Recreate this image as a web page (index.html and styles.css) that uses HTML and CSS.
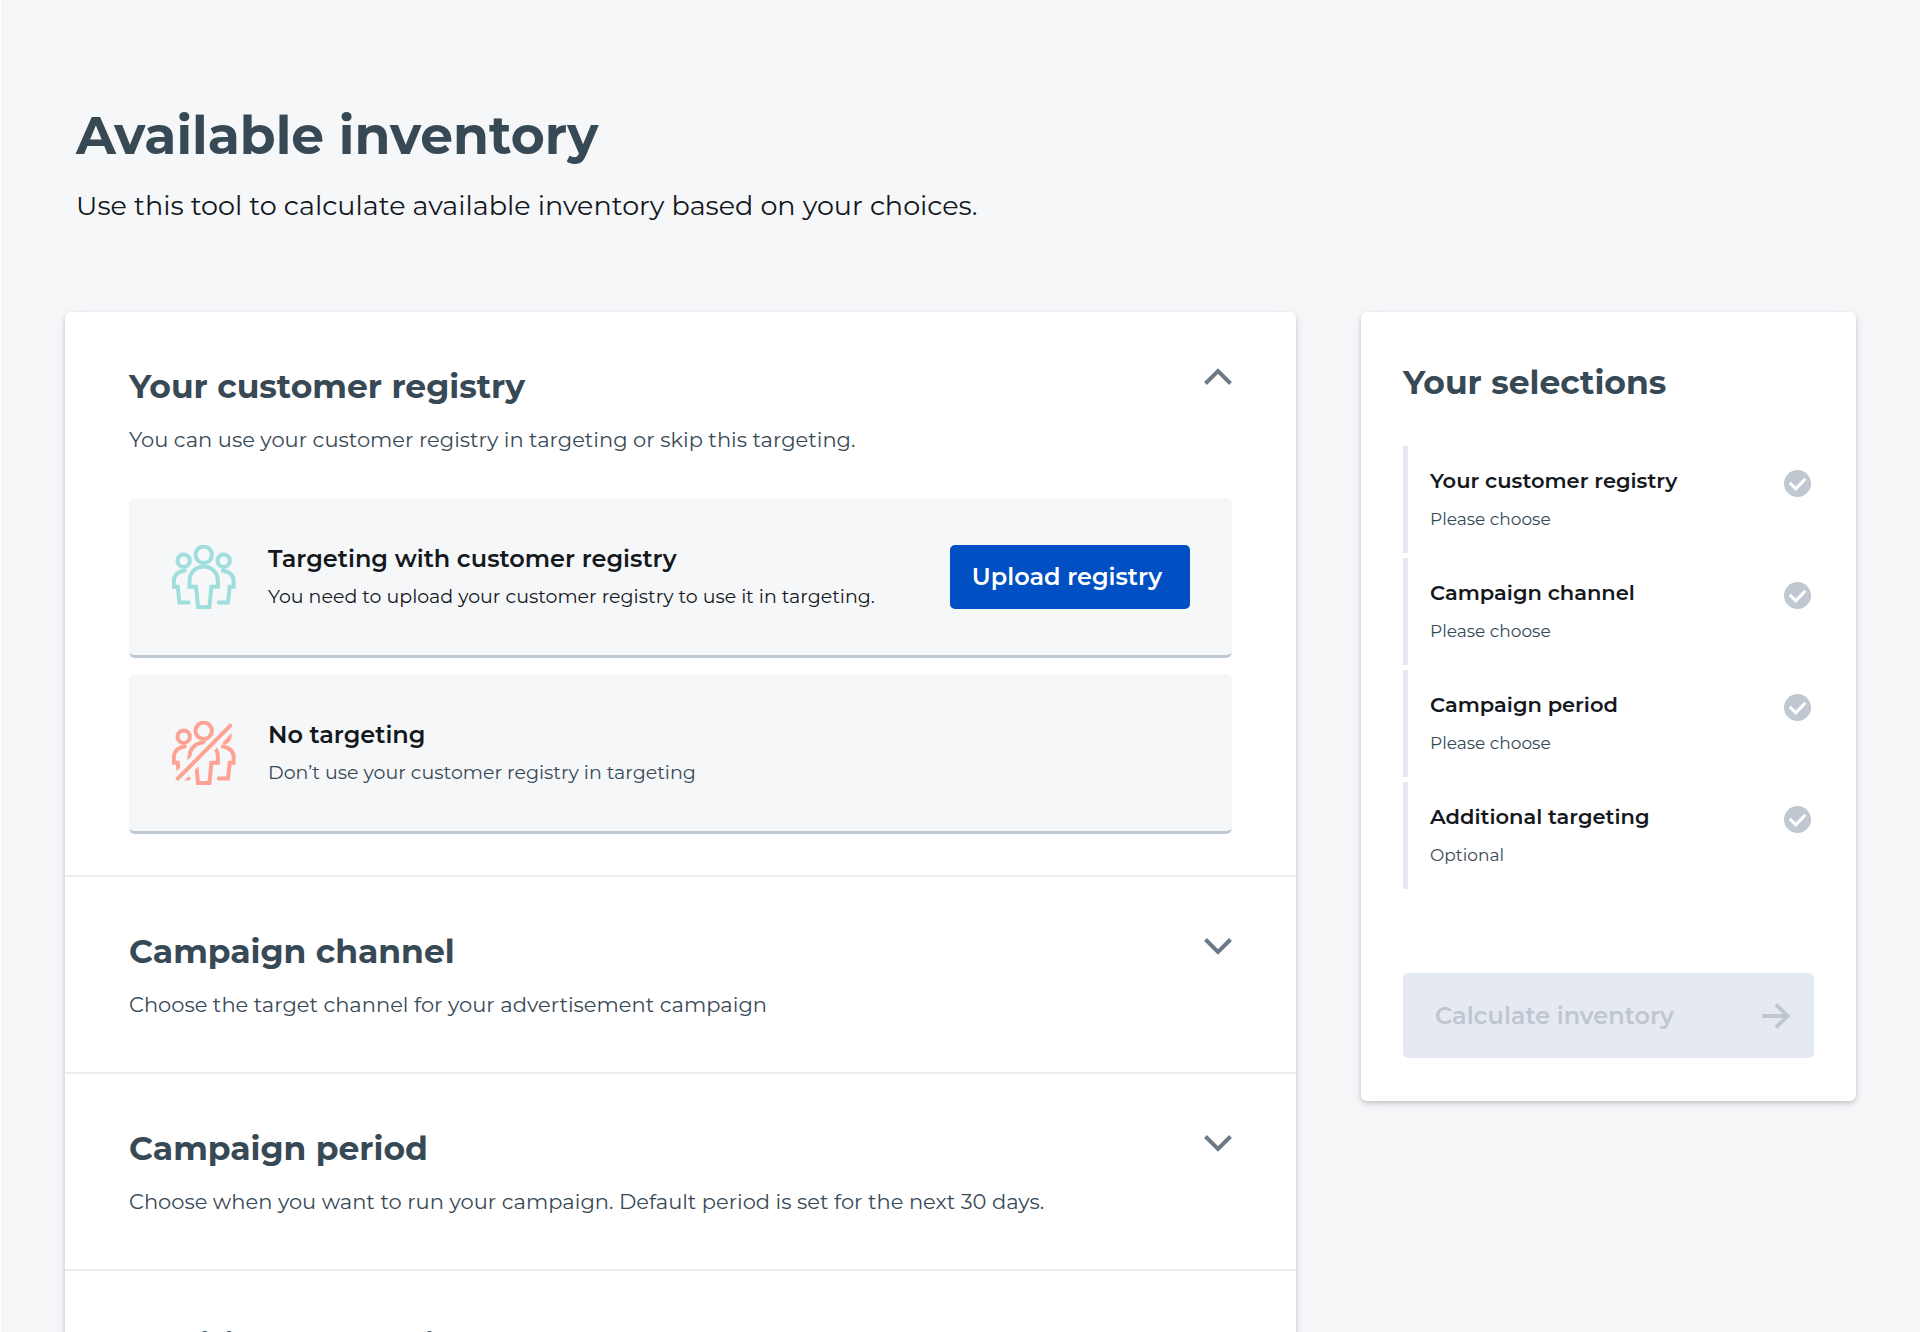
FILE: index.html
```html
<!DOCTYPE html>
<html lang="en">
<head>
    <meta charset="UTF-8">
    <meta name="viewport" content="width=device-width, initial-scale=1.0">
    <title>Available inventory</title>
    <link rel="stylesheet" href="styles.css">
</head>
<body>
    <header class="page-header">
        <h1>Available inventory</h1>
        <p>Use this tool to calculate available inventory based on your choices.</p>
    </header>

    <div class="columns">
        <main class="card">
            <section class="step">
                <div class="step-header">
                    <div>
                        <h2>Your customer registry</h2>
                        <p class="step-text">You can use your customer registry in targeting or skip this targeting.</p>
                    </div>
                    <button class="toggle open" type="button" aria-label="Collapse" aria-expanded="true">
                        <svg viewBox="0 0 28 18"><path d="M1.5 15.5 14 3l12.5 12.5"/></svg>
                    </button>
                </div>

                <div class="options">
                    <div class="option">
                        <svg class="option-icon teal" viewBox="0 0 64 64">
                            <circle cx="31.7" cy="9.8" r="8.2"/>
                            <circle cx="11.7" cy="15.7" r="6.2"/>
                            <circle cx="51.7" cy="15.7" r="6.2"/>
                            <path d="M17.5 41.7V35.7a14.2 14.2 0 0 1 28.4 0v6H39.4L37.4 62H26l-2-20.3z"/>
                            <path d="M12.7 25.4C6.5 26 1.8 30 1.8 36v5.7h3.9l1.7 15.8h9.2"/>
                            <path d="M50.7 25.4c6.2.6 10.9 4.6 10.9 10.6v5.7h-3.9L56 57.5h-9.2"/>
                        </svg>
                        <div class="option-body">
                            <h3>Targeting with customer registry</h3>
                            <p>You need to upload your customer registry to use it in targeting.</p>
                        </div>
                        <button class="upload" type="button">Upload registry</button>
                    </div>

                    <div class="option">
                        <svg class="option-icon salmon" viewBox="0 0 64 64">
                            <mask id="slash-gap" maskUnits="userSpaceOnUse" x="0" y="0" width="64" height="64">
                                <rect class="mask-keep" width="64" height="64"/>
                                <path class="mask-cut" d="M-2 65.5 66-3"/>
                            </mask>
                            <g mask="url(#slash-gap)">
                                <circle cx="11.7" cy="15.7" r="6.2"/>
                                <path d="M57.5 12.5c.6 4.2-1.5 7.6-4.8 9.2"/>
                                <path d="M17.5 41.7V35.7a14.2 14.2 0 0 1 28.4 0v6H39.4L37.4 62H26l-2-20.3z"/>
                                <path d="M12.7 25.4C6.5 26 1.8 30 1.8 36v5.7h3.9l1.7 15.8h9.2"/>
                                <path d="M50.7 25.4c6.2.6 10.9 4.6 10.9 10.6v5.7h-3.9L56 57.5h-9.2"/>
                            </g>
                            <circle cx="31.7" cy="9.8" r="8.2"/>
                            <path d="M5.7 57.7 58.3 4.7"/>
                        </svg>
                        <div class="option-body">
                            <h3>No targeting</h3>
                            <p class="muted">Don’t use your customer registry in targeting</p>
                        </div>
                    </div>
                </div>
            </section>

            <section class="step">
                <div class="step-header">
                    <div>
                        <h2>Campaign channel</h2>
                        <p class="step-text">Choose the target channel for your advertisement campaign</p>
                    </div>
                    <button class="toggle" type="button" aria-label="Expand" aria-expanded="false">
                        <svg viewBox="0 0 28 18"><path d="M1.5 2.5 14 15 26.5 2.5"/></svg>
                    </button>
                </div>
            </section>

            <section class="step">
                <div class="step-header">
                    <div>
                        <h2>Campaign period</h2>
                        <p class="step-text">Choose when you want to run your campaign. Default period is set for the next 30 days.</p>
                    </div>
                    <button class="toggle" type="button" aria-label="Expand" aria-expanded="false">
                        <svg viewBox="0 0 28 18"><path d="M1.5 2.5 14 15 26.5 2.5"/></svg>
                    </button>
                </div>
            </section>

            <section class="step">
                <div class="step-header">
                    <h2>Additional targeting</h2>
                </div>
            </section>
        </main>

        <aside class="card summary">
            <h2>Your selections</h2>
            <ul class="selections">
                <li>
                    <div>
                        <h4>Your customer registry</h4>
                        <p>Please choose</p>
                    </div>
                    <svg class="check" viewBox="0 0 27 27"><circle cx="13.5" cy="13.5" r="13.5"/><path d="m5.8 12.8 6 6 9.6-10"/></svg>
                </li>
                <li>
                    <div>
                        <h4>Campaign channel</h4>
                        <p>Please choose</p>
                    </div>
                    <svg class="check" viewBox="0 0 27 27"><circle cx="13.5" cy="13.5" r="13.5"/><path d="m5.8 12.8 6 6 9.6-10"/></svg>
                </li>
                <li>
                    <div>
                        <h4>Campaign period</h4>
                        <p>Please choose</p>
                    </div>
                    <svg class="check" viewBox="0 0 27 27"><circle cx="13.5" cy="13.5" r="13.5"/><path d="m5.8 12.8 6 6 9.6-10"/></svg>
                </li>
                <li>
                    <div>
                        <h4>Additional targeting</h4>
                        <p>Optional</p>
                    </div>
                    <svg class="check" viewBox="0 0 27 27"><circle cx="13.5" cy="13.5" r="13.5"/><path d="m5.8 12.8 6 6 9.6-10"/></svg>
                </li>
            </ul>
            <button class="calculate" type="button" disabled>
                Calculate inventory
                <svg viewBox="0 0 28 26"><path d="M0 13h25M14 1.5 25.5 13 14 24.5"/></svg>
            </button>
        </aside>
    </div>
</body>
</html>
```

FILE: styles.css
```css
* {
    box-sizing: border-box;
}
html {
    background: #f6f7f9;
}
body {
    margin: 0;
    padding: 104px 64px 0;
    height: 100vh;
    overflow: hidden;
    border-left: 1px solid #fff;
    font-family: Montserrat, Inter, sans-serif;
    color: #14181c;
}
h1, h2, h3, h4, p, ul {
    margin: 0;
    padding: 0;
}
h1, h2 {
    color: #384956;
    font-weight: 700;
}
svg {
    flex: none;
    fill: none;
}
button {
    font-family: inherit;
    border: none;
    cursor: pointer;
}
.page-header {
    padding: 0 11px;
    margin-bottom: 86px;
}
h1 {
    font-size: 52px;
    line-height: 64px;
}
.page-header p {
    margin-top: 18px;
    font-size: 27px;
    line-height: 40px;
}
.columns {
    display: grid;
    grid-template-columns: minmax(0, 1fr) 495px;
    gap: 65px;
    align-items: start;
}
.card {
    background: #fff;
    border-radius: 6px;
    box-shadow: 0 2px 4px rgba(20, 30, 45, 0.2), 0 4px 16px rgba(20, 30, 45, 0.06);
}
.step {
    padding: 52px 64px 41px;
    border-bottom: 2px solid #e9edf2;
}
.step-header {
    display: flex;
    justify-content: space-between;
    align-items: flex-start;
}
h2 {
    font-size: 33px;
    line-height: 44px;
}
.step-text {
    margin-top: 16px;
    margin-bottom: 10px;
    font-size: 21px;
    line-height: 32px;
    color: #384956;
}
.toggle {
    padding: 8px 0;
    background: none;
}
.toggle.open {
    padding: 4px 0;
}
.toggle svg {
    display: block;
    width: 28px;
    stroke: #6c7a87;
    stroke-width: 4;
}
.options {
    display: flex;
    flex-direction: column;
    gap: 16px;
    margin-top: 32px;
}
.option {
    display: flex;
    align-items: center;
    gap: 32px;
    min-height: 160px;
    padding: 0 42px 0 43px;
    background: #f6f7f9;
    border-bottom: 3px solid #bfc7d1;
    border-radius: 6px;
}
.option-icon {
    width: 64px;
    height: 64px;
    stroke-width: 4;
    stroke-linecap: round;
}
.teal {
    stroke: #a0dedd;
}
.salmon {
    stroke: #fea393;
}
.mask-keep {
    fill: #fff;
    stroke: none;
}
.mask-cut {
    stroke: #000;
    stroke-width: 12;
}
.option-body {
    flex: 1;
}
h3 {
    font-size: 24px;
    line-height: 36px;
    font-weight: 600;
}
.option-body p {
    margin-top: 4px;
    font-size: 19px;
    line-height: 32px;
}
.option-body .muted {
    color: #384956;
}
.upload {
    height: 64px;
    padding: 0 28px 0 22px;
    background: #0050c3;
    border-radius: 5px;
    color: #fff;
    font-size: 24px;
    font-weight: 600;
}
.summary {
    padding: 48px 42px 43px;
}
.selections {
    display: flex;
    flex-direction: column;
    gap: 5px;
    margin: 42px 0 84px;
    list-style: none;
}
.selections li {
    display: flex;
    justify-content: space-between;
    align-items: flex-start;
    padding: 20px 3px 19px 22px;
    border-left: 5px solid #e5eaf1;
}
h4 {
    font-size: 21px;
    line-height: 30px;
    font-weight: 600;
}
.selections p {
    margin-top: 8px;
    font-size: 17px;
    line-height: 30px;
    color: #384956;
}
.check {
    width: 27px;
    height: 27px;
    margin-top: 4px;
}
.check circle {
    fill: #c0c7d0;
}
.check path {
    stroke: #fff;
    stroke-width: 3;
}
.calculate {
    display: flex;
    justify-content: space-between;
    align-items: center;
    width: 100%;
    height: 85px;
    padding: 0 24px 0 32px;
    background: #e5eaf2;
    border-radius: 5px;
    color: #c0c6cf;
    font-size: 24px;
    font-weight: 600;
    cursor: default;
}
.calculate svg {
    width: 28px;
    stroke: #c0c6cf;
    stroke-width: 4;
}
```
